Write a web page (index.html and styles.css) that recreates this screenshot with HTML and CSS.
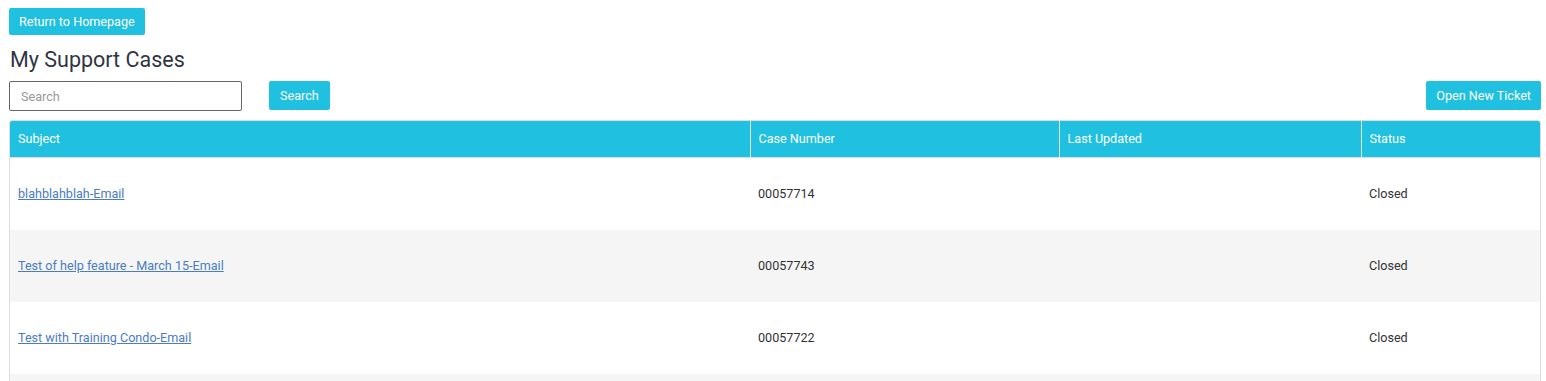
FILE: index.html
```html
<!DOCTYPE html>
<html lang="en">
<head>
    <meta charset="UTF-8">
    <meta name="viewport" content="width=device-width, initial-scale=1.0">
    <title>My Support Cases</title>
    <link rel="stylesheet" href="styles.css">
</head>
<body>
    <div class="page">
        <button class="btn btn-home" type="button">Return to Homepage</button>
        <h2 class="title">My Support Cases</h2>

        <div class="toolbar">
            <input class="search-box" type="text" placeholder="Search">
            <button class="btn btn-search" type="button">Search</button>
            <button class="btn btn-new" type="button">Open New Ticket</button>
        </div>

        <div class="table-wrap">
            <table class="cases">
                <colgroup>
                    <col class="col-subject">
                    <col class="col-number">
                    <col class="col-updated">
                    <col class="col-status">
                </colgroup>
                <thead>
                    <tr>
                        <th>Subject</th>
                        <th>Case Number</th>
                        <th>Last Updated</th>
                        <th>Status</th>
                    </tr>
                </thead>
                <tbody>
                    <tr>
                        <td><a href="#">blahblahblah-Email</a></td>
                        <td>00057714</td>
                        <td></td>
                        <td>Closed</td>
                    </tr>
                    <tr>
                        <td><a href="#">Test of help feature - March 15-Email</a></td>
                        <td>00057743</td>
                        <td></td>
                        <td>Closed</td>
                    </tr>
                    <tr>
                        <td><a href="#">Test with Training Condo-Email</a></td>
                        <td>00057722</td>
                        <td></td>
                        <td>Closed</td>
                    </tr>
                    <tr class="more">
                        <td></td>
                        <td></td>
                        <td></td>
                        <td></td>
                    </tr>
                </tbody>
            </table>
        </div>
    </div>
</body>
</html>
```

FILE: styles.css
```css
body{
    margin: 0;
    background-color: #fff;
    font-family: Roboto, "Liberation Sans", Arial, sans-serif;
    color: #333;
}
.page{
    padding: 8px 5px 0 9px;
}
.btn{
    border: none;
    border-radius: 2px;
    background-color: #20c0e0;
    color: #fff;
    font-family: inherit;
    font-size: 12.6px;
    padding: 0 11px;
    cursor: pointer;
}
.btn-home{
    display: block;
    height: 27px;
    padding: 0 10px;
}
.title{
    margin: 11px 0 0 1px;
    font-size: 21.5px;
    font-weight: 400;
    line-height: 28px;
    color: #2f3542;
}
.toolbar{
    display: flex;
    align-items: flex-start;
    margin-top: 7px;
}
.search-box{
    box-sizing: border-box;
    width: 233px;
    height: 30px;
    border: 1px solid #666;
    border-radius: 2px;
    padding: 0 11px;
    font-family: inherit;
    font-size: 12.6px;
    color: #333;
}
.search-box::placeholder{
    color: #999;
}
.btn-search{
    height: 29px;
    margin-left: 27px;
}
.btn-new{
    height: 29px;
    margin-left: auto;
    padding: 0 10px;
}
.table-wrap{
    margin-top: 9px;
    border: 1px solid #ddd;
    border-radius: 3px;
    overflow: hidden;
}
.cases{
    width: 100%;
    border-collapse: collapse;
    table-layout: fixed;
    font-size: 12.6px;
    line-height: 14px;
}
.col-subject{ width: 740px; }
.col-number{ width: 309px; }
.col-updated{ width: 302px; }
.cases th{
    height: 35px;
    padding: 0 8px 1px;
    background-color: #20c0e0;
    color: #fff;
    font-weight: 400;
    text-align: left;
    border-left: 1px solid #e8f7fb;
    border-bottom: 1px solid #ddd;
}
.cases th:first-child{
    border-left: none;
}
.cases td{
    height: 71px;
    padding: 0 8px 1px;
    vertical-align: middle;
    color: #333;
}
.cases tbody tr:nth-child(even){
    background-color: #f5f5f5;
}
.cases a{
    color: #4a7cc4;
    text-decoration: underline;
}
```
